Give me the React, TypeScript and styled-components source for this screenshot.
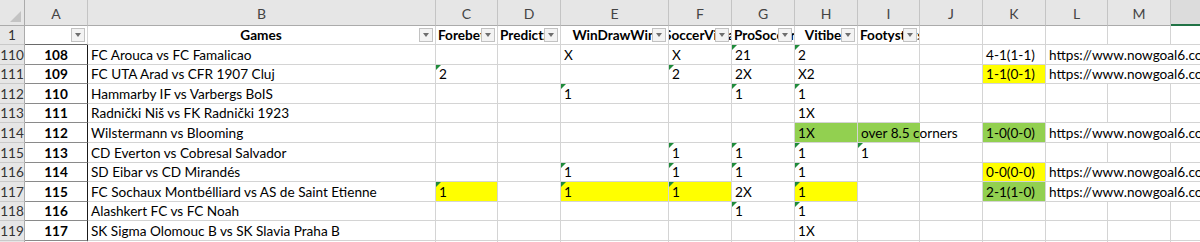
import React from "react";
import styled, { createGlobalStyle, css } from "styled-components";

const Global = createGlobalStyle`
  html, body { margin: 0; padding: 0; background: #fff; }
  body { font-family: "Lato", "Liberation Sans", sans-serif; }
`;

const FONT = 13.6;

const Root = styled.div`
  width: 1200px;
  height: 242px;
  overflow: hidden;
  background: #fff;
`;

const Sheet = styled.div`
  display: grid;
  grid-template-columns: 25px 63px 348px 62px 63px 108px 63px 63px 63px 62px 63px 63px 62px 63px 110px;
  grid-template-rows: 26px 19px 20px 19px 20px 19px 20px 20px 19px 20px 19px 20px 20px;
  width: 1281px;
  font-size: ${FONT}px;
  color: #000;
`;

const Corner = styled.div`
  position: relative;
  background: #e6e6e6;
  border-right: 1px solid #ababab;
  border-bottom: 1px solid #ababab;
  &::after {
    content: "";
    position: absolute;
    right: 3px;
    bottom: 3px;
    width: 0;
    height: 0;
    border-left: 11px solid transparent;
    border-bottom: 11px solid #c3c3c3;
  }
`;

const ColHead = styled.div<{ $sel?: boolean }>`
  display: flex;
  align-items: flex-end;
  justify-content: center;
  padding-bottom: 3px;
  box-sizing: border-box;
  background: #e6e6e6;
  border-right: 1px solid #c4c4c4;
  border-bottom: 1px solid #ababab;
  color: #444;
  font-size: 14px;
  ${(p) =>
    p.$sel &&
    css`
      background: #dcdcdc;
      border-bottom: 2px solid #217346;
      color: #217346;
    `}
`;

const RowHead = styled.div`
  display: flex;
  align-items: flex-end;
  justify-content: center;
  padding-bottom: 1px;
  box-sizing: border-box;
  background: #e6e6e6;
  border-right: 1px solid #ababab;
  border-bottom: 1px solid #c9c9c9;
  color: #333;
  font-size: ${FONT}px;
`;

const Cell = styled.div<{
  $fill?: string;
  $flag?: boolean;
  $open?: boolean;
  $span?: number;
}>`
  position: relative;
  display: flex;
  align-items: flex-end;
  justify-content: flex-start;
  padding: 0 3px 1px 3px;
  box-sizing: border-box;
  white-space: nowrap;
  border-right: 1px solid ${(p) => (p.$open ? "transparent" : "#d4d4d4")};
  border-bottom: 1px solid #d4d4d4;
  background: ${(p) => p.$fill || "transparent"};
  ${(p) => (p.$span ? `grid-column: span ${p.$span};` : "")}
  overflow: ${(p) => (p.$span ? "hidden" : "visible")};
  z-index: ${(p) => (p.$open ? 1 : 0)};
  ${(p) =>
    p.$flag &&
    css`
      &::before {
        content: "";
        position: absolute;
        left: 0;
        top: 0;
        width: 0;
        height: 0;
        border-top: 5px solid #1f8b3b;
        border-right: 5px solid transparent;
      }
    `}
`;

const IdCell = styled.div`
  display: flex;
  align-items: flex-end;
  justify-content: center;
  padding-bottom: 1px;
  box-sizing: border-box;
  font-weight: 700;
  border-right: 1px solid #1a1a1a;
  border-bottom: 1px solid #8a8a8a;
`;

const FilterCell = styled.div<{ $align?: "left" | "center"; $dark?: boolean }>`
  position: relative;
  display: flex;
  align-items: flex-end;
  justify-content: ${(p) => (p.$align === "center" ? "center" : "flex-start")};
  padding: 0 3px 1px 2px;
  box-sizing: border-box;
  overflow: hidden;
  white-space: nowrap;
  font-weight: 700;
  border-right: 1px solid #d4d4d4;
  border-bottom: 1px solid ${(p) => (p.$dark ? "#6a6a6a" : "#d4d4d4")};
`;

const FilterButton = styled.span`
  position: absolute;
  right: 2px;
  top: 2px;
  width: 14px;
  height: 14px;
  box-sizing: border-box;
  background: #f3f3f3;
  border: 1px solid #c2c2c2;
  display: flex;
  align-items: center;
  justify-content: center;
  &::after {
    content: "";
    width: 0;
    height: 0;
    border-left: 3.5px solid transparent;
    border-right: 3.5px solid transparent;
    border-top: 4px solid #6e6e6e;
  }
`;

const YELLOW = "#ffff00";
const GREEN = "#92d050";
const URL = "https://www.nowgoal6.com/match/h2h-1234567";

type CellData = { v?: string; fill?: string; flag?: boolean; span?: number; open?: boolean };
type RowData = { n: number; id: string; game: string; cells: Record<string, CellData> };

const LETTERS = ["C", "D", "E", "F", "G", "H", "I", "J", "K", "L", "M", "N"];
const ALL = ["A", "B", ...LETTERS];

const rows: RowData[] = [
  {
    n: 110, id: "108", game: "FC Arouca vs FC Famalicao",
    cells: { E: { v: "X" }, F: { v: "X" }, G: { v: "21", flag: true }, H: { v: "2", flag: true }, K: { v: "4-1(1-1)" }, L: { v: URL, span: 3 } },
  },
  {
    n: 111, id: "109", game: "FC UTA Arad vs CFR 1907 Cluj",
    cells: { C: { v: "2", flag: true }, F: { v: "2", flag: true }, G: { v: "2X" }, H: { v: "X2" }, K: { v: "1-1(0-1)", fill: YELLOW }, L: { v: URL, span: 3 } },
  },
  {
    n: 112, id: "110", game: "Hammarby IF vs Varbergs BoIS",
    cells: { E: { v: "1", flag: true }, G: { v: "1", flag: true }, H: { v: "1", flag: true } },
  },
  {
    n: 113, id: "111", game: "Radnički Niš vs FK Radnički 1923",
    cells: { H: { v: "1X" } },
  },
  {
    n: 114, id: "112", game: "Wilstermann vs Blooming",
    cells: { H: { v: "1X", fill: GREEN }, I: { v: "over 8.5 corners", fill: GREEN, open: true }, K: { v: "1-0(0-0)", fill: GREEN }, L: { v: URL, span: 3 } },
  },
  {
    n: 115, id: "113", game: "CD Everton vs Cobresal Salvador",
    cells: { F: { v: "1", flag: true }, G: { v: "1", flag: true }, H: { v: "1", flag: true }, I: { v: "1", flag: true } },
  },
  {
    n: 116, id: "114", game: "SD Eibar vs CD Mirandés",
    cells: { E: { v: "1", flag: true }, F: { v: "1", flag: true }, G: { v: "1", flag: true }, H: { v: "1", flag: true }, K: { v: "0-0(0-0)", fill: YELLOW }, L: { v: URL, span: 3 } },
  },
  {
    n: 117, id: "115", game: "FC Sochaux Montbélliard vs AS de Saint Etienne",
    cells: {
      C: { v: "1", flag: true, fill: YELLOW },
      E: { v: "1", flag: true, fill: YELLOW },
      F: { v: "1", flag: true, fill: YELLOW },
      G: { v: "2X" },
      H: { v: "1", flag: true, fill: YELLOW },
      K: { v: "2-1(1-0)", fill: GREEN },
      L: { v: URL, span: 3 },
    },
  },
  {
    n: 118, id: "116", game: "Alashkert FC vs FC Noah",
    cells: { G: { v: "1", flag: true }, H: { v: "1", flag: true } },
  },
  {
    n: 119, id: "117", game: "SK Sigma Olomouc B vs SK Slavia Praha B",
    cells: { H: { v: "1X" } },
  },
];

const headers: { col: string; text: string; align: "left" | "center"; dark?: boolean }[] = [
  { col: "A", text: "", align: "center", dark: true },
  { col: "B", text: "Games", align: "center" },
  { col: "C", text: "Forebet", align: "left" },
  { col: "D", text: "Predictz", align: "left" },
  { col: "E", text: "WinDrawWin", align: "center" },
  { col: "F", text: "SoccerVista", align: "center" },
  { col: "G", text: "ProSoccer", align: "left" },
  { col: "H", text: "Vitibet", align: "center" },
  { col: "I", text: "Footystats", align: "left" },
];

function DataRow({ r }: { r: RowData }) {
  const out: React.ReactNode[] = [];
  let skip = 0;
  LETTERS.forEach((l) => {
    if (skip > 0) {
      skip--;
      return;
    }
    const c = r.cells[l];
    if (c?.span) skip = c.span - 1;
    out.push(
      <Cell key={l} $fill={c?.fill} $flag={c?.flag} $open={c?.open} $span={c?.span}>
        {c?.v ?? ""}
      </Cell>
    );
  });
  return (
    <>
      <RowHead>{r.n}</RowHead>
      <IdCell>{r.id}</IdCell>
      <Cell>{r.game}</Cell>
      {out}
    </>
  );
}

export default function App() {
  return (
    <Root>
      <Global />
      <Sheet>
        <Corner />
        {ALL.map((l) => (
          <ColHead key={l} $sel={l === "N"}>
            {l}
          </ColHead>
        ))}
        <RowHead>1</RowHead>
        {headers.map((h) => (
          <FilterCell key={h.col} $align={h.align} $dark={h.dark}>
            {h.text}
            <FilterButton />
          </FilterCell>
        ))}
        {LETTERS.slice(7).map((l) => (
          <Cell key={l} />
        ))}
        {rows.map((r) => (
          <DataRow key={r.n} r={r} />
        ))}
        <RowHead>120</RowHead>
        {ALL.map((l) => (
          <Cell key={l} />
        ))}
      </Sheet>
    </Root>
  );
}
